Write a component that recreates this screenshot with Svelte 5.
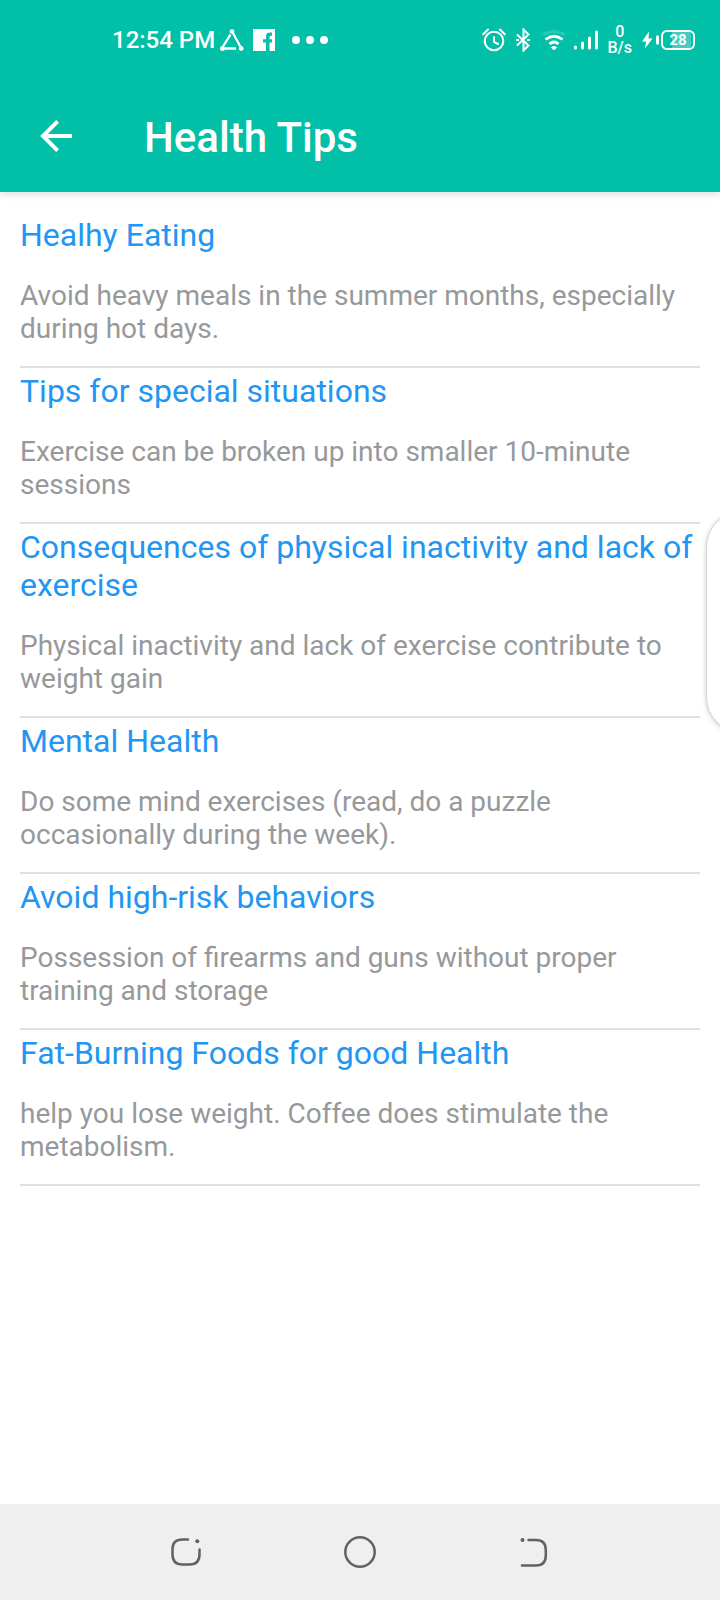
<script>
  const tips = [
    { title: 'Healhy Eating', text: 'Avoid heavy meals in the summer months, especially during hot days.' },
    { title: 'Tips for special situations', text: 'Exercise can be broken up into smaller 10-minute sessions' },
    { title: 'Consequences of physical inactivity and lack of exercise', text: 'Physical inactivity and lack of exercise contribute to weight gain' },
    { title: 'Mental Health', text: 'Do some mind exercises (read, do a puzzle occasionally during the week).' },
    { title: 'Avoid high-risk behaviors', text: 'Possession of firearms and guns without proper training and storage' },
    { title: 'Fat-Burning Foods for good Health', text: 'help you lose weight. Coffee does stimulate the metabolism.' }
  ];
</script>

<div class="screen">
  <header>
    <div class="status">
      <div class="left">
        <span class="time">12:54 PM</span>
        <svg class="share" width="24" height="24" viewBox="0 0 24 24" fill="none" stroke="#fff" stroke-width="2.300" aria-hidden="true">
          <path d="M10.500 6.500 3 18.500M13 5l7.500 14M5 20.500h11" />
          <g fill="#fff" stroke="none"><circle cx="12" cy="3.500" r="2.300" /><circle cx="2.500" cy="20.500" r="2.500" /><circle cx="21.200" cy="20.500" r="2.400" /></g>
        </svg>
        <svg width="22" height="22" viewBox="0 0 22 22" aria-hidden="true">
          <path fill="#fff" fill-rule="evenodd" d="M0 0H22V22H16.500V13.500H19V10.300H16.500V8.300Q16.500 6.700 18 6.700H19V3.500H17Q13 3.500 13 7.500V10.300H10V13.500H13V22H0Z" />
        </svg>
        <svg class="dots" width="36" height="8" viewBox="0 0 36 8" fill="#fff" aria-hidden="true"><circle cx="4" cy="4" r="4" /><circle cx="18" cy="4" r="4" /><circle cx="32" cy="4" r="4" /></svg>
      </div>
      <div class="right">
        <svg width="24" height="24" viewBox="0 0 24 24" fill="none" stroke="#fff" stroke-width="2" stroke-linecap="round" aria-hidden="true">
          <circle cx="12" cy="13" r="9.300" /><path d="M12 9v5l4 2M1.200 6.200 6 1.500M22.800 6.200 18 1.500" />
        </svg>
        <svg class="bluetooth" width="14" height="24" viewBox="0 0 14 24" fill="none" stroke="#fff" stroke-width="2" aria-hidden="true">
          <path d="M1 6.500 12.500 17.500 7.500 22.500V1.500L12.500 6.500 1 17.500" /><path d="M0 12h3M11 12H14" />
        </svg>
        <svg class="wifi" width="24" height="20" viewBox="0 0 24 20" fill="none" stroke="#fff" stroke-width="2.800" aria-hidden="true">
          <path opacity=".15" d="M1 5Q12-2 23 5" /><path d="M3.500 9.500Q12 3 20.500 9.500M7.500 14Q12 10 16.500 14" /><path fill="#fff" stroke="none" d="M8.800 17.500Q12 14.500 15.200 17.500L12 20.500Z" />
        </svg>
        <svg class="signal" width="24" height="20" viewBox="0 0 24 20" stroke="#fff" stroke-width="3" stroke-linecap="round" aria-hidden="true">
          <path d="M1.500 17v1M8.500 13v5M15.500 8v10M22.500 2v16" />
        </svg>
        <span class="speed"><span>0</span><span>B/s</span></span>
        <svg class="bolt" width="18" height="20" viewBox="0 0 18 20" fill="#fff" aria-hidden="true"><path d="M7 1.500 0 11.500h4L3 18.500 10.500 8.500H6.500Z" /><rect x="14" y="5.500" width="3" height="9" rx="1" /></svg>
        <span class="battery">28</span>
      </div>
    </div>
    <div class="bar">
      <button class="back" aria-label="Back">
        <svg width="32" height="32" viewBox="0 0 32 32" fill="none" stroke="#fff" stroke-width="4" aria-hidden="true"><path d="M32 16H4M17.600 1.400 3 16 17.600 30.600" /></svg>
      </button>
      <h1>Health Tips</h1>
    </div>
  </header>

  <main>
    {#each tips as tip}
      <article>
        <h2>{tip.title}</h2>
        <p>{tip.text}</p>
      </article>
    {/each}
  </main>

  <nav>
    <button aria-label="Recent apps">
      <svg width="32" height="32" viewBox="0 0 32 32" fill="none" stroke="#616161" stroke-width="2.500" stroke-linecap="round" aria-hidden="true"><path d="M18 3.500H12.500Q2.500 3.500 2.500 13V18.500Q2.500 28.500 12.500 28.500H19.500Q29.500 28.500 29.500 18.500V13.500" /><circle cx="27.300" cy="5.200" r="2" fill="#616161" stroke="none" /></svg>
    </button>
    <button aria-label="Home">
      <svg width="32" height="32" viewBox="0 0 32 32" fill="none" stroke="#616161" stroke-width="2.500" aria-hidden="true"><circle cx="16" cy="16" r="14.700" /></svg>
    </button>
    <button aria-label="Back">
      <svg width="32" height="32" viewBox="0 0 32 32" fill="none" stroke="#616161" stroke-width="2.500" stroke-linecap="round" aria-hidden="true"><path d="M10.500 4H18Q27.800 4 27.800 14V19.500Q27.800 29.500 18 29.500H4" /><circle cx="4.500" cy="4" r="2" fill="#616161" stroke="none" /></svg>
    </button>
  </nav>
  <button class="edge" aria-label="Open side panel"></button>
</div>

<style>
  :global(body) { margin: 0; background: #fff; }
  .screen { min-height: 100vh; display: flex; flex-direction: column; font-family: Roboto, sans-serif; overflow-x: hidden; position: relative; }
  svg { display: block; flex: none; }
  button { border: 0; background: none; padding: 0; display: grid; place-items: center; cursor: pointer; }
  header { background: #02bfa7; color: #fff; box-shadow: 0 2px 8px rgba(0, 0, 0, .14); }
  .status { height: 80px; display: flex; justify-content: space-between; align-items: center; padding: 0 25px 0 112px; }
  .left, .right { display: flex; align-items: center; }
  .time { font-size: 24px; line-height: 28px; font-weight: 500; }
  .share { margin: 0 9px 0 5px; }
  .dots { margin-left: 17px; }
  .bluetooth { margin-left: 10px; }
  .wifi { margin-left: 12px; }
  .signal { margin-left: 8px; }
  .speed { display: grid; justify-items: center; margin-left: 9px; font-size: 16px; line-height: 16px; font-weight: 500; }
  .bolt { margin: 0 1px 0 10px; }
  .battery { box-sizing: border-box; width: 34px; height: 20px; border: 2px solid #fff; border-radius: 6px; font-size: 15px; line-height: 16px; font-weight: 700; text-align: center; background: linear-gradient(90deg, transparent 28%, #45cdbb 28%) content-box; padding: 0 2px; }
  .bar { height: 112px; display: flex; align-items: center; padding-left: 32px; }
  .back { width: 48px; height: 48px; }
  h1 { margin: 0 0 0 64px; padding-top: 4px; font-size: 42px; line-height: 48px; font-weight: 500; }
  main { flex: 1; padding: 20px; }
  article { padding: 4px 0 21px; border-bottom: 2px solid #e0e0e0; }
  h2 { margin: 0; font-size: 32px; line-height: 38px; font-weight: 400; color: #2196f3; }
  p { margin: 25px 0 0; font-size: 28px; line-height: 33px; color: #96999b; }
  nav { height: 96px; background: #efefef; display: flex; justify-content: center; align-items: center; gap: 126px; }
  nav button { width: 48px; height: 48px; }
  .edge { position: absolute; right: -66px; top: 511px; width: 80px; height: 222px; box-sizing: border-box; background: #fff; border: 1px solid #d6d6d6; border-radius: 36px; box-shadow: 0 1px 5px rgba(0, 0, 0, .2); }
</style>
